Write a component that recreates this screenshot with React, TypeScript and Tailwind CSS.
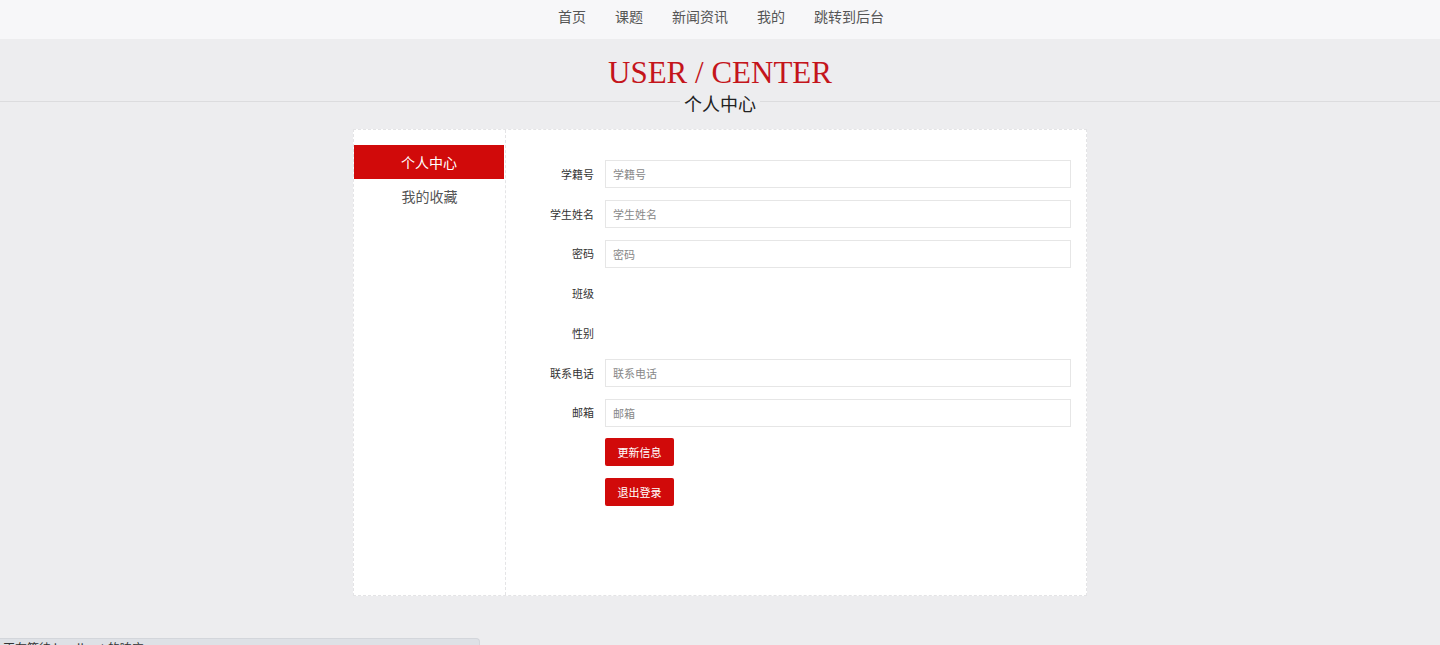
import React from 'react';

const navItems = ['首页', '课题', '新闻资讯', '我的', '跳转到后台'];

const fields = [
  { label: '学籍号', input: true },
  { label: '学生姓名', input: true },
  { label: '密码', input: true },
  { label: '班级', input: false },
  { label: '性别', input: false },
  { label: '联系电话', input: true },
  { label: '邮箱', input: true },
];

const cn = { fontFamily: '"Microsoft YaHei", "Noto Sans CJK SC", "Noto Sans", sans-serif' };

export default function App() {
  return (
    <div className="relative min-h-[645px] bg-[#ededef] text-[#333]" style={cn}>
      {/* Top Nav */}
      <nav className="h-[39px] bg-[#f7f7f9] flex items-center justify-center gap-[29px] pb-[7px] pl-[2px]">
        {navItems.map((item) => (
          <a key={item} className="text-[14px] text-[#555] cursor-pointer">
            {item}
          </a>
        ))}
      </nav>

      {/* Title */}
      <div className="pt-[16px] text-center">
        <div className="text-[31px] leading-[35px] text-[#c4151b]" style={{ fontFamily: '"Liberation Serif", serif' }}>
          USER / CENTER
        </div>
        <div className="relative mt-[1px] h-[24px]">
          <div className="absolute left-0 right-0 top-[10px] h-px bg-[#dcdcde]" />
          <span className="relative bg-[#ededef] px-[4px] text-[18px] leading-[24px] text-[#222]">个人中心</span>
        </div>
      </div>

      {/* Card */}
      <div className="mx-auto mt-[14px] flex h-[467px] w-[734px] border border-dashed border-[#e4e4e6] bg-white">
        <aside className="w-[152px] shrink-0 border-r border-dashed border-[#e4e4e6] pt-[15px]">
          <div className="mr-[1px] flex h-[34px] items-center justify-center bg-[#d10a0a] text-[14px] text-white">
            个人中心
          </div>
          <div className="flex h-[34px] items-center justify-center text-[14px] text-[#555]">我的收藏</div>
        </aside>

        <div className="flex flex-1 flex-col gap-[11.75px] pt-[30px] pr-[15px]">
          {fields.map((f) => (
            <div key={f.label} className="flex h-[28px] items-center">
              <label className="w-[88px] shrink-0 text-right text-[11px] text-[#333]">{f.label}</label>
              {f.input ? (
                <input
                  placeholder={f.label}
                  className="ml-[11px] h-[28px] flex-1 border border-[#e6e6e6] bg-white px-[7px] text-[11px] outline-none placeholder:text-[#888]"
                  style={cn}
                />
              ) : null}
            </div>
          ))}
          {['更新信息', '退出登录'].map((b) => (
            <div key={b} className="flex h-[28px] pl-[99px]">
              <button className="h-[28px] w-[69px] rounded-[2px] bg-[#d10a0a] text-[11px] text-white" style={cn}>
                {b}
              </button>
            </div>
          ))}
        </div>
      </div>

      {/* browser status bubble */}
      <div className="absolute bottom-0 left-0 h-[7px] w-[480px] overflow-hidden rounded-tr-[4px] border-t border-r border-[#d3d6db] bg-[#dee1e6]">
        <span className="block pl-[3px] pt-[2px] text-[12px] leading-[14px] text-[#333]">正在等待 localhost 的响应...</span>
      </div>
    </div>
  );
}
